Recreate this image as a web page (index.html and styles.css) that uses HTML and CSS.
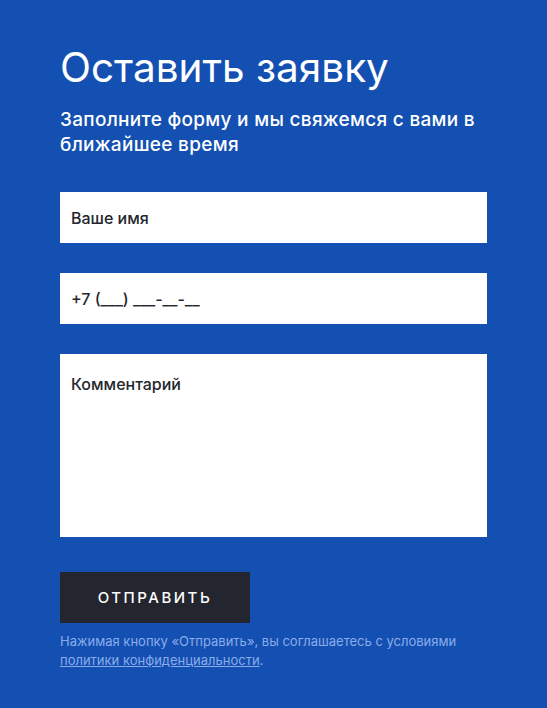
FILE: index.html
```html
<!DOCTYPE html>
<html lang="ru">
<head>
<meta charset="utf-8">
<link rel="stylesheet" href="styles.css">
</head>
<body>
<section class="form-section">
  <h1 class="title">Оставить заявку</h1>
  <p class="subtitle">Заполните форму и мы свяжемся с вами в ближайшее время</p>
  <form class="form">
    <div class="field"><span class="placeholder">Ваше имя</span></div>
    <div class="field"><span class="placeholder">+7 (___) ___-__-__</span></div>
    <div class="field field-area"><span class="placeholder">Комментарий</span></div>
    <button type="button" class="submit">ОТПРАВИТЬ</button>
    <p class="note">Нажимая кнопку «Отправить», вы соглашаетесь с условиями <a class="link" href="#">политики конфиденциальности</a>.</p>
  </form>
</section>
</body>
</html>
```
FILE: styles.css
```css
html, body {
  margin: 0;
  padding: 0;
  background: #1450b1;
}
body {
  font-family: Inter, "Noto Sans", sans-serif;
  color: #fff;
}
.form-section {
  padding: 44px 60px 0 60px;
  width: 427px;
}
.title {
  margin: 0;
  font-size: 40.5px;
  font-weight: 400;
  line-height: 48px;
  letter-spacing: 0;
}
.subtitle {
  margin: 15px 0 0 0;
  font-size: 19px;
  line-height: 25px;
  font-weight: 500;
  letter-spacing: 0.3px;
}
.form {
  margin-top: 35px;
  display: flex;
  flex-direction: column;
}
.field {
  background: #fff;
  height: 51px;
  display: flex;
  align-items: center;
  padding: 0 11px;
  margin-bottom: 30px;
}
.field-area {
  height: 183px;
  align-items: flex-start;
  padding-top: 20px;
  box-sizing: border-box;
  margin-bottom: 35px;
}
.placeholder {
  color: #24262c;
  font-size: 16px;
  font-weight: 500;
}
.submit {
  width: 190px;
  height: 51px;
  background: #23262e;
  color: #fff;
  border: 0;
  font-family: Inter, "Noto Sans", sans-serif;
  font-size: 15px;
  font-weight: 500;
  letter-spacing: 2.5px;
  padding: 0;
}
.note {
  margin: 9px 0 0 0;
  font-size: 13px;
  line-height: 19px;
  font-weight: 400;
  color: #8bacea;
}
.link {
  color: #8bacea;
  text-decoration: underline;
}
```
